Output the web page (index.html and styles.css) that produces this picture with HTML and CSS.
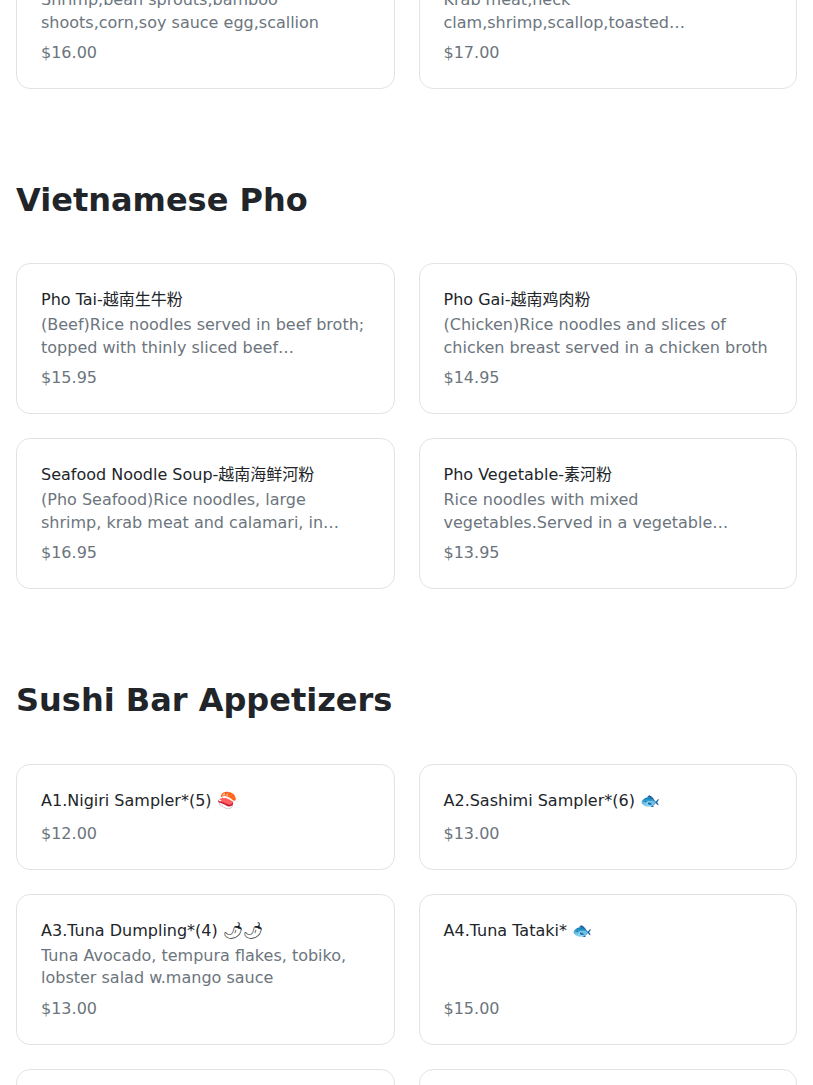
FILE: index.html
```html
<!DOCTYPE html>
<html lang="en">
<head>
<meta charset="utf-8">
<title>Menu</title>
<link rel="stylesheet" href="styles.css">
</head>
<body>
<main class="menu">
  <section class="category category--continued">
    <div class="grid">
      <article class="card">
        <h3 class="card-title">Spicy Miso Ramen</h3>
        <p class="card-desc">Shrimp,bean sprouts,bamboo shoots,corn,soy sauce egg,scallion</p>
        <p class="card-price">$16.00</p>
      </article>
      <article class="card">
        <h3 class="card-title">Seafood Ramen</h3>
        <p class="card-desc">Krab meat,neck clam,shrimp,scallop,toasted seaweed,scallion,soy sauce egg</p>
        <p class="card-price">$17.00</p>
      </article>
    </div>
  </section>

  <section class="category">
    <h2 class="category-title">Vietnamese Pho</h2>
    <div class="grid">
      <article class="card">
        <h3 class="card-title">Pho Tai-越南生牛粉</h3>
        <p class="card-desc">(Beef)Rice noodles served in beef broth; topped with thinly sliced beef tenderloin, onions and cilantro</p>
        <p class="card-price">$15.95</p>
      </article>
      <article class="card">
        <h3 class="card-title">Pho Gai-越南鸡肉粉</h3>
        <p class="card-desc">(Chicken)Rice noodles and slices of chicken breast served in a chicken broth</p>
        <p class="card-price">$14.95</p>
      </article>
      <article class="card">
        <h3 class="card-title">Seafood Noodle Soup-越南海鲜河粉</h3>
        <p class="card-desc">(Pho Seafood)Rice noodles, large shrimp, krab meat and calamari, in flavorful seafood broth</p>
        <p class="card-price">$16.95</p>
      </article>
      <article class="card">
        <h3 class="card-title">Pho Vegetable-素河粉</h3>
        <p class="card-desc">Rice noodles with mixed vegetables.Served in a vegetable broth.Topped with herbs</p>
        <p class="card-price">$13.95</p>
      </article>
    </div>
  </section>

  <section class="category">
    <h2 class="category-title">Sushi Bar Appetizers</h2>
    <div class="grid">
      <article class="card">
        <h3 class="card-title">A1.Nigiri Sampler*(5) 🍣</h3>
        <p class="card-price">$12.00</p>
      </article>
      <article class="card">
        <h3 class="card-title">A2.Sashimi Sampler*(6) 🐟</h3>
        <p class="card-price">$13.00</p>
      </article>
      <article class="card">
        <h3 class="card-title">A3.Tuna Dumpling*(4) 🌶🌶</h3>
        <p class="card-desc">Tuna Avocado, tempura flakes, tobiko, lobster salad w.mango sauce</p>
        <p class="card-price">$13.00</p>
      </article>
      <article class="card">
        <h3 class="card-title">A4.Tuna Tataki* 🐟</h3>
        <p class="card-price">$15.00</p>
      </article>
      <article class="card">
        <h3 class="card-title">A5.Yellowtail Jalapeño*</h3>
        <p class="card-desc">Yellowtail sashimi, jalapeño, ponzu sauce</p>
        <p class="card-price">$15.00</p>
      </article>
      <article class="card">
        <h3 class="card-title">A6.Salmon Carpaccio*</h3>
        <p class="card-desc">Thinly sliced salmon with yuzu dressing</p>
        <p class="card-price">$15.00</p>
      </article>
    </div>
  </section>
</main>
</body>
</html>
```

FILE: styles.css
```css
* {
  box-sizing: border-box;
}

body {
  margin: 0;
  background: #ffffff;
  color: #212529;
  font-family: "DejaVu Sans", "Noto Sans CJK SC", sans-serif;
}

/* page is shown scrolled: the previous category's last row is cut off at the top */
.menu {
  margin-top: -62px;
  padding: 0 16px 48px;
}

.category + .category {
  margin-top: 92px;
}

.category-title {
  margin: 0 0 44px;
  font-size: 32px;
  line-height: 1.2;
  font-weight: 700;
  color: #212529;
}

.grid {
  display: grid;
  grid-template-columns: 1fr 1fr;
  gap: 24px;
}

.card {
  display: flex;
  flex-direction: column;
  padding: 24px 24px 23px;
  border: 1px solid #e3e3e3;
  border-radius: 14px;
  background: #ffffff;
}

.card-title {
  margin: 0 0 2px;
  font-size: 16px;
  line-height: 24px;
  font-weight: 400;
  color: #212529;
}

.card-desc {
  margin: 0;
  font-size: 16px;
  line-height: 22.5px;
  color: #6c757d;
  display: -webkit-box;
  -webkit-line-clamp: 2;
  -webkit-box-orient: vertical;
  overflow: hidden;
}

.card-price {
  margin: auto 0 0;
  padding-top: 7px;
  font-size: 16px;
  line-height: 24px;
  color: #6c757d;
}
```
